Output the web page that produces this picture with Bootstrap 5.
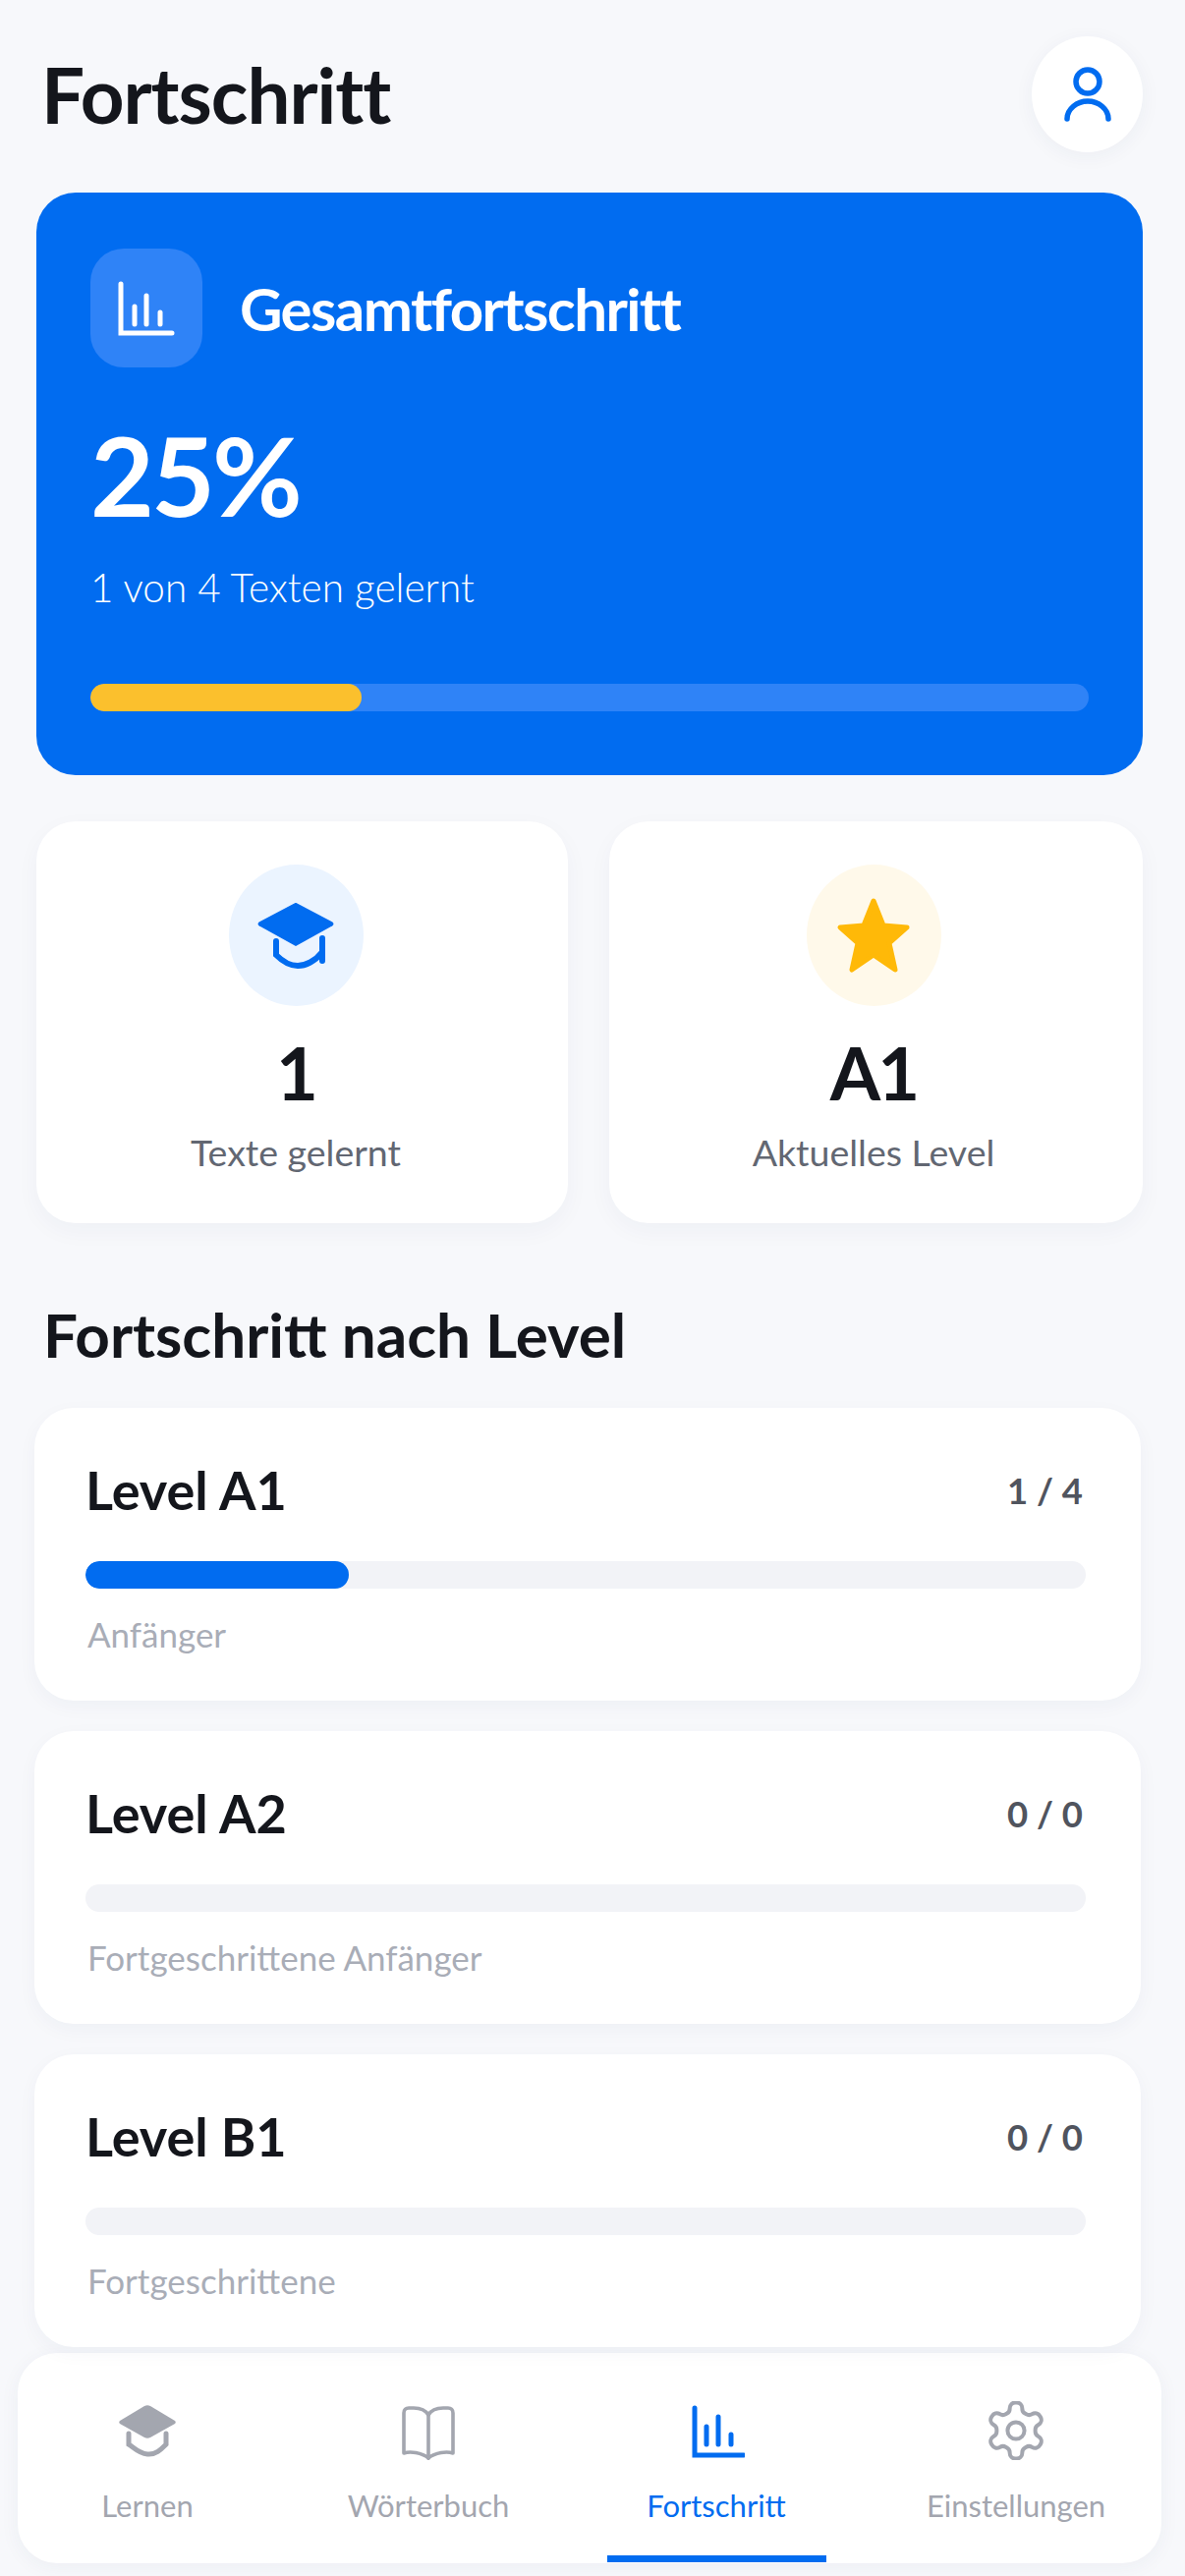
<!DOCTYPE html>
<html lang="de">
<head>
  <meta charset="UTF-8" />
  <meta name="viewport" content="width=device-width, initial-scale=1.0" />
  <title>Fortschritt</title>
  <link rel="stylesheet" href="https://cdn.jsdelivr.net/npm/bootstrap@5.3.0/dist/css/bootstrap.min.css" />
  <style>
    body {
      background-color: #f7f8fb;
      font-family: "Lato", "Liberation Sans", sans-serif;
      color: #14161c;
      height: 2622px;
      overflow: hidden;
    }
    .page-wrap { padding: 37px 43px 0 37px; }
    .page-title { font-size: 78px; font-weight: 700; line-height: 118px; letter-spacing: -1px; margin: 0 0 0 5px; }
    .user-btn {
      width: 113px; height: 118px; border-radius: 50%;
      background: #fff; box-shadow: 0 4px 20px rgba(30, 50, 90, .05);
    }
    .hero-card {
      height: 593px; margin-top: 41px; padding: 57px 55px 0;
      background: #016cf0; border-radius: 40px; color: #fff;
    }
    .hero-tile { width: 114px; height: 121px; border-radius: 34px; background: #2f83f7; }
    .hero-name { font-size: 60px; font-weight: 700; line-height: 1; letter-spacing: -1.6px; margin-left: 38px; }
    .hero-pct { font-size: 112px; font-weight: 700; line-height: 112px; letter-spacing: -3px; margin-top: 53px; }
    .hero-sub { font-size: 40.5px; font-weight: 300; line-height: 48px; margin-top: 35px; }
    .hero-track { height: 28px; margin-top: 74px; border-radius: 14px; background: #2f83f7; overflow: hidden; }
    .hero-fill { height: 100%; border-radius: 14px; background: #fbc02d; }
    .stat-row { display: grid; grid-template-columns: 541px 543px; gap: 42px; margin-top: 47px; }
    .stat-card {
      height: 409px; padding: 44px 5px 0 0; background: #fff; border-radius: 40px;
      box-shadow: 0 8px 24px rgba(30, 50, 90, .04);
    }
    .stat-card.is-first { padding-right: 13px; }
    .stat-circle { width: 137px; height: 144px; border-radius: 50%; }
    .stat-circle.is-blue { background: #ebf4ff; }
    .stat-circle.is-amber { background: #fff9ea; }
    .stat-num { font-size: 74px; font-weight: 700; line-height: 74px; letter-spacing: -3px; margin-top: 31px; }
    .stat-label { font-size: 37.5px; line-height: 44px; color: #626772; margin-top: 22px; }
    .section-title { font-size: 62px; font-weight: 700; line-height: 72px; margin: 77px 0 0 7px; }
    .level-list { display: flex; flex-direction: column; gap: 31px; margin: 39px 2px 0 -2px; }
    .level-card {
      height: 298px; padding: 51px 59px 0 52px; background: #fff; border-radius: 40px;
      box-shadow: 0 6px 20px rgba(30, 50, 90, .04);
    }
    .level-name { font-size: 54px; font-weight: 700; line-height: 66px; }
    .level-count { font-size: 36.5px; font-weight: 700; line-height: 66px; color: #50545e; }
    .level-track { height: 28px; margin: 39px -3px 0 0; border-radius: 14px; background: #f2f3f7; overflow: hidden; }
    .level-fill { height: 100%; border-radius: 14px; background: #016cf0; }
    .level-sub { font-size: 35px; line-height: 40px; color: #a9adb7; margin: 26px 0 0 2px; }
    .tab-bar {
      display: grid; grid-template-columns: 264px 308px 278px 314px;
      height: 214px; margin: 6px 24px 0 18px; background: #fff; border-radius: 40px;
      box-shadow: 0 4px 20px rgba(30, 50, 90, .05);
    }
    .tab-item { position: relative; padding-top: 49px; color: #a3a6af; font-size: 31px; line-height: 40px; }
    .tab-item.is-active { color: #016cf0; }
    .tab-item.is-last { padding-left: 18px; }
    .tab-label { margin-top: 26px; }
    .tab-line { position: absolute; left: 28px; right: 27px; bottom: 1px; height: 7px; background: #016cf0; }
  </style>
</head>
<body>

<div class="page-wrap">
  <div class="d-flex justify-content-between align-items-center">
    <h1 class="page-title">Fortschritt</h1>
    <div class="user-btn d-flex align-items-center justify-content-center">
      <svg width="48" height="56" viewBox="0 0 48 56" fill="none" stroke="#016cf0" stroke-width="5.5" stroke-linecap="round">
        <circle cx="24" cy="15" r="12"></circle>
        <path d="M3 53c0-10 10-18 21-18s21 8 21 18"></path>
      </svg>
    </div>
  </div>

  <div class="hero-card">
    <div class="d-flex align-items-center">
      <div class="hero-tile d-flex align-items-center justify-content-center">
        <svg width="58" height="56" viewBox="0 0 58 56" fill="none" stroke="#fff" stroke-linecap="round">
          <path d="M3 3v50h52" stroke-width="5"></path>
          <path d="M17 26v18M29 15v29M43 32v12" stroke-width="5"></path>
        </svg>
      </div>
      <div class="hero-name">Gesamtfortschritt</div>
    </div>
    <div class="hero-pct">25%</div>
    <div class="hero-sub">1 von 4 Texten gelernt</div>
    <div class="hero-track"><div class="hero-fill" style="width: 27.2%"></div></div>
  </div>

  <div class="stat-row">
    <div class="stat-card is-first d-flex flex-column align-items-center">
      <div class="stat-circle is-blue d-flex align-items-center justify-content-center">
        <svg width="135" height="144" viewBox="24 20 135 144" fill="none">
          <path d="M91 60l36 19c2 1 2 2 0 3l-36 20-36-20c-2-1-2-2 0-3z" fill="#016cf0" stroke="#016cf0" stroke-width="2" stroke-linejoin="round"></path>
          <path d="M71 98v14c6 6 14 11 22 11s18-5 24-13M118 95v23" stroke="#016cf0" stroke-width="6" stroke-linecap="round"></path>
        </svg>
      </div>
      <div class="stat-num">1</div>
      <div class="stat-label">Texte gelernt</div>
    </div>
    <div class="stat-card d-flex flex-column align-items-center">
      <div class="stat-circle is-amber d-flex align-items-center justify-content-center">
        <svg width="76" height="78" viewBox="0 0 76 78">
          <path d="M38 4l10 25 24 2-18 16 6 27-22-15-22 15 6-27L4 31l24-2z" fill="#ffb908" stroke="#ffb908" stroke-width="5" stroke-linejoin="round"></path>
        </svg>
      </div>
      <div class="stat-num">A1</div>
      <div class="stat-label">Aktuelles Level</div>
    </div>
  </div>

  <h2 class="section-title">Fortschritt nach Level</h2>

  <div class="level-list">
    <div class="level-card">
      <div class="d-flex justify-content-between">
        <div class="level-name">Level A1</div>
        <div class="level-count">1 / 4</div>
      </div>
      <div class="level-track"><div class="level-fill" style="width: 26.3%"></div></div>
      <div class="level-sub">Anfänger</div>
    </div>
    <div class="level-card">
      <div class="d-flex justify-content-between">
        <div class="level-name">Level A2</div>
        <div class="level-count">0 / 0</div>
      </div>
      <div class="level-track"></div>
      <div class="level-sub">Fortgeschrittene Anfänger</div>
    </div>
    <div class="level-card">
      <div class="d-flex justify-content-between">
        <div class="level-name">Level B1</div>
        <div class="level-count">0 / 0</div>
      </div>
      <div class="level-track"></div>
      <div class="level-sub">Fortgeschrittene</div>
    </div>
  </div>
</div>

<nav class="tab-bar">
  <div class="tab-item d-flex flex-column align-items-center">
    <svg width="60" height="60" viewBox="0 0 60 60" fill="none">
      <path d="M27 5c2-1 4-1 6 0l25 15c1 1 1 2 0 3L33 37c-2 1-4 1-6 0L2 23c-1-1-1-2 0-3z" fill="#a3a6af"></path>
      <path d="M11 33v11c5 3 10 9 19 10s15-6 19-10V33" stroke="#a3a6af" stroke-width="5" stroke-linecap="round"></path>
    </svg>
    <div class="tab-label">Lernen</div>
  </div>
  <div class="tab-item d-flex flex-column align-items-center">
    <svg width="56" height="60" viewBox="0 0 56 60" fill="none" stroke="#a3a6af" stroke-width="3.6" stroke-linejoin="round" stroke-linecap="round">
      <path d="M28 14C25 9 20 7 13 7H8c-3 0-5 2-5 5v41c6-2 18-1 25 5"></path>
      <path d="M28 14c3-5 8-7 15-7h5c3 0 5 2 5 5v41c-6-2-18-1-25 5"></path>
      <path d="M28 14v44"></path>
    </svg>
    <div class="tab-label">Wörterbuch</div>
  </div>
  <div class="tab-item is-active d-flex flex-column align-items-center">
    <svg width="58" height="60" viewBox="0 0 58 60" fill="none" stroke="#016cf0" stroke-linecap="round">
      <path d="M7 7v48h50" stroke-width="5"></path>
      <path d="M19 26v18M31 16v28M44 34v10" stroke-width="5"></path>
    </svg>
    <div class="tab-label">Fortschritt</div>
    <div class="tab-line"></div>
  </div>
  <div class="tab-item is-last d-flex flex-column align-items-center">
    <svg width="58" height="60" viewBox="2 1.5 20 21" fill="none" stroke="#a3a6af" stroke-width="1.4">
      <path d="M12.22 2h-.44a2 2 0 0 0-2 2v.18a2 2 0 0 1-1 1.73l-.43.25a2 2 0 0 1-2 0l-.15-.08a2 2 0 0 0-2.73.73l-.22.38a2 2 0 0 0 .73 2.73l.15.1a2 2 0 0 1 1 1.72v.51a2 2 0 0 1-1 1.74l-.15.09a2 2 0 0 0-.73 2.73l.22.38a2 2 0 0 0 2.73.73l.15-.08a2 2 0 0 1 2 0l.43.25a2 2 0 0 1 1 1.73V20a2 2 0 0 0 2 2h.44a2 2 0 0 0 2-2v-.18a2 2 0 0 1 1-1.73l.43-.25a2 2 0 0 1 2 0l.15.08a2 2 0 0 0 2.73-.73l.22-.39a2 2 0 0 0-.73-2.73l-.15-.08a2 2 0 0 1-1-1.74v-.5a2 2 0 0 1 1-1.74l.15-.09a2 2 0 0 0 .73-2.73l-.22-.38a2 2 0 0 0-2.73-.73l-.15.08a2 2 0 0 1-2 0l-.43-.25a2 2 0 0 1-1-1.73V4a2 2 0 0 0-2-2z"></path>
      <circle cx="12" cy="12" r="3"></circle>
    </svg>
    <div class="tab-label">Einstellungen</div>
  </div>
</nav>

<script src="https://cdn.jsdelivr.net/npm/bootstrap@5.3.0/dist/js/bootstrap.bundle.min.js"></script>
</body>
</html>
